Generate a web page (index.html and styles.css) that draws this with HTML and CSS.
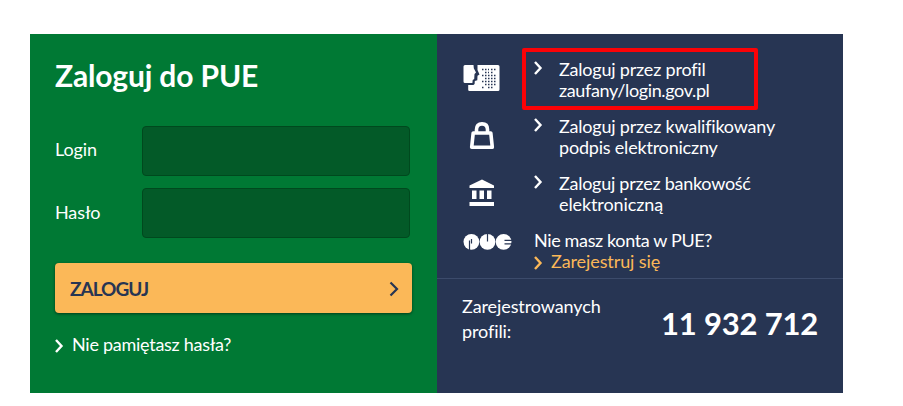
FILE: index.html
```html
<!DOCTYPE html>
<html lang="pl">
<head>
<meta charset="utf-8">
<title>Zaloguj do PUE</title>
<link rel="stylesheet" href="styles.css">
</head>
<body>
<svg class="symbols" aria-hidden="true">
  <symbol id="chevron" viewBox="0 0 10 14"><path d="M2 1 7.500 7 2 13" fill="none" stroke="currentColor" stroke-width="2.400"/></symbol>
</svg>
<main class="panel">
  <form class="login">
    <h1 class="title">Zaloguj do PUE</h1>
    <div class="field"><label class="label" for="login">Login</label><input class="input" id="login" type="text"></div>
    <div class="field"><label class="label" for="pass">Hasło</label><input class="input" id="pass" type="password"></div>
    <button class="submit" type="button"><span class="submit-text">ZALOGUJ</span><svg class="submit-arrow" viewBox="0 0 10 16"><path d="M1.5 1.5 8 8 1.5 14.5" fill="none" stroke="currentColor" stroke-width="2.2"/></svg></button>
    <a class="forgot"><svg class="chevron"><use href="#chevron"/></svg><span class="forgot-text">Nie pamiętasz hasła?</span></a>
  </form>
  <section class="side">
    <div class="methods">
      <div class="method">
        <svg class="icon" viewBox="0 0 50 42" fill="#fff">
          <path d="M3 6h8.500l.3 3.200 2.200 4.300-1.500 1.400-.3 5.200-1.500.8-.3 3H3q-1.500 0-1.500-1.500V7.500Q1.500 6 3 6Z"/>
          <path d="M15.500 6H36q1.500 0 1.500 1.500v23q0 1.500-1.500 1.500H7.500q-1.300 0-1.300-1.300V26h5.200l1.200-1 .2-3 2.500-.8.2-4.400 2-1.200-2-4.600Z"/>
          <path d="M20 10.500H27M29 10.500H34.500M23 13.500H27M29 13.500H31M20 16.500H34.500M23 19.500H34.500M20 22.500H34.500M23 25.500H34.500M20 28.500H22M26 28.500H31" fill="none" stroke="#273553" stroke-width="1.500" stroke-dasharray="1.500 1.500"/>
        </svg>
        <svg class="chevron"><use href="#chevron"/></svg>
        <a class="method-text"><span class="snug">Zaloguj przez profil</span><br><span class="tight">zaufany/login.gov.pl</span></a>
        <span class="highlight"></span>
      </div>
      <div class="method">
        <svg class="icon" viewBox="0 0 50 42" fill="none" stroke="#fff" stroke-width="3.600">
          <path d="M11.200 17h17.600l1.500 14.200H9.700Z" stroke-linejoin="round"/>
          <path d="M14.500 16.800V13.500q0-5.600 5.500-5.600t5.500 5.600v3.300"/>
        </svg>
        <svg class="chevron"><use href="#chevron"/></svg>
        <a class="method-text"><span class="snug">Zaloguj przez kwalifikowany</span><br><span class="snug">podpis elektroniczny</span></a>
      </div>
      <div class="method">
        <svg class="icon" viewBox="0 0 50 42" fill="#fff"><path d="M20 6.500 32 12.500V15H7.500v-2.500ZM10 17.500h4.500V26H10ZM17.500 17.500H22V26h-4.500ZM25 17.500h4.500V26H25ZM7.500 29H32v4H7.500Z"/></svg>
        <svg class="chevron"><use href="#chevron"/></svg>
        <a class="method-text"><span class="bank">Zaloguj przez bankowość</span><br><span class="light">elektroniczną</span></a>
      </div>
      <div class="method">
        <svg class="icon" viewBox="0 0 50 42">
          <g fill="#fff"><circle cx="9.400" cy="11.800" r="7.900"/><circle cx="25.500" cy="11.800" r="7.900"/><circle cx="41.600" cy="11.800" r="7.900"/></g>
          <path d="M7.500 20v-9.500M9.500 9v4.500M25.500 3.500v8M42.500 10.300h8M42.500 13.800h8" fill="none" stroke="#273553" stroke-width="1.200"/>
        </svg>
        <div class="register"><div class="tight">Nie masz konta w PUE?</div><a class="register-link light"><svg class="chevron"><use href="#chevron"/></svg>Zarejestruj się</a></div>
      </div>
    </div>
    <div class="stats"><span class="stats-label">Zarejestrowanych profili:</span><strong class="stats-number">11 932 712</strong></div>
  </section>
</main>
</body>
</html>
```
FILE: styles.css
```css
* { box-sizing: border-box; }
body { margin: 0; background: #fff; font: 18px/21px Lato, sans-serif; color: #fff; }
.symbols { position: absolute; width: 0; height: 0; }
.panel { display: flex; width: 813px; height: 359px; margin: 34px 0 0 30px; }
.login { width: 407px; padding: 23px 25px 0; background: #007934; }
.title { margin: 0 0 33px; font-size: 30px; line-height: 36px; font-weight: 700; letter-spacing: -.15px; white-space: nowrap; }
.field { display: flex; align-items: center; height: 50px; margin-bottom: 12px; }
.label { width: 87px; padding-bottom: 2px; letter-spacing: -.1px; }
.field:first-of-type .label { padding-bottom: 4px; }
.input { width: 268px; height: 50px; padding: 0 12px; border: 1px solid #00491e; border-radius: 4px; background: #035a28; color: #fff; font: inherit; outline: 0; }
.submit { display: flex; align-items: center; justify-content: space-between; width: 357px; height: 50px; margin-top: 25px; padding: 0 13px 0 15px; border: 0; border-radius: 4px; background: #fbb858; box-shadow: 0 1px 3px rgba(0, 0, 0, .5); color: #273553; font: 700 19px/24px Lato, sans-serif; letter-spacing: -1px; }
.submit-text { padding-top: 2px; }
.submit-arrow { width: 10px; height: 16px; margin-top: 2px; }
.chevron { display: block; flex: none; width: 10px; height: 14px; }
.forgot { display: flex; align-items: center; margin-top: 21px; letter-spacing: -.27px; }
.forgot .chevron { margin: 3px 8px 0 -1px; }
.side { width: 406px; background: #273553; }
.methods { display: flex; flex-direction: column; gap: 15px; height: 245px; padding: 25px 0 0 25px; border-bottom: 1px solid #3c4b6b; }
.method { position: relative; display: flex; height: 42px; white-space: nowrap; }
.icon { flex: none; width: 50px; height: 42px; margin-right: 21px; }
.method > .chevron { margin: 2px 16px 0 0; }
.snug { letter-spacing: -.2px; }
.bank { letter-spacing: -.26px; }
.tight { letter-spacing: -.36px; }
.light { letter-spacing: -.1px; }
.highlight { position: absolute; left: 60px; top: -11px; width: 236px; height: 62px; border: 4px solid #fb0207; border-radius: 2px; }
.register { padding-left: 1px; }
.register-link { display: flex; align-items: center; color: #fbb858; }
.register-link .chevron { margin: 2px 8px 0 -1px; }
.stats { display: flex; justify-content: space-between; padding: 15px 25px 0; line-height: 25px; letter-spacing: -.1px; }
.stats-label { width: 150px; }
.stats-number { margin-top: 9px; font-size: 31px; line-height: 40px; letter-spacing: -.2px; white-space: nowrap; }
```
